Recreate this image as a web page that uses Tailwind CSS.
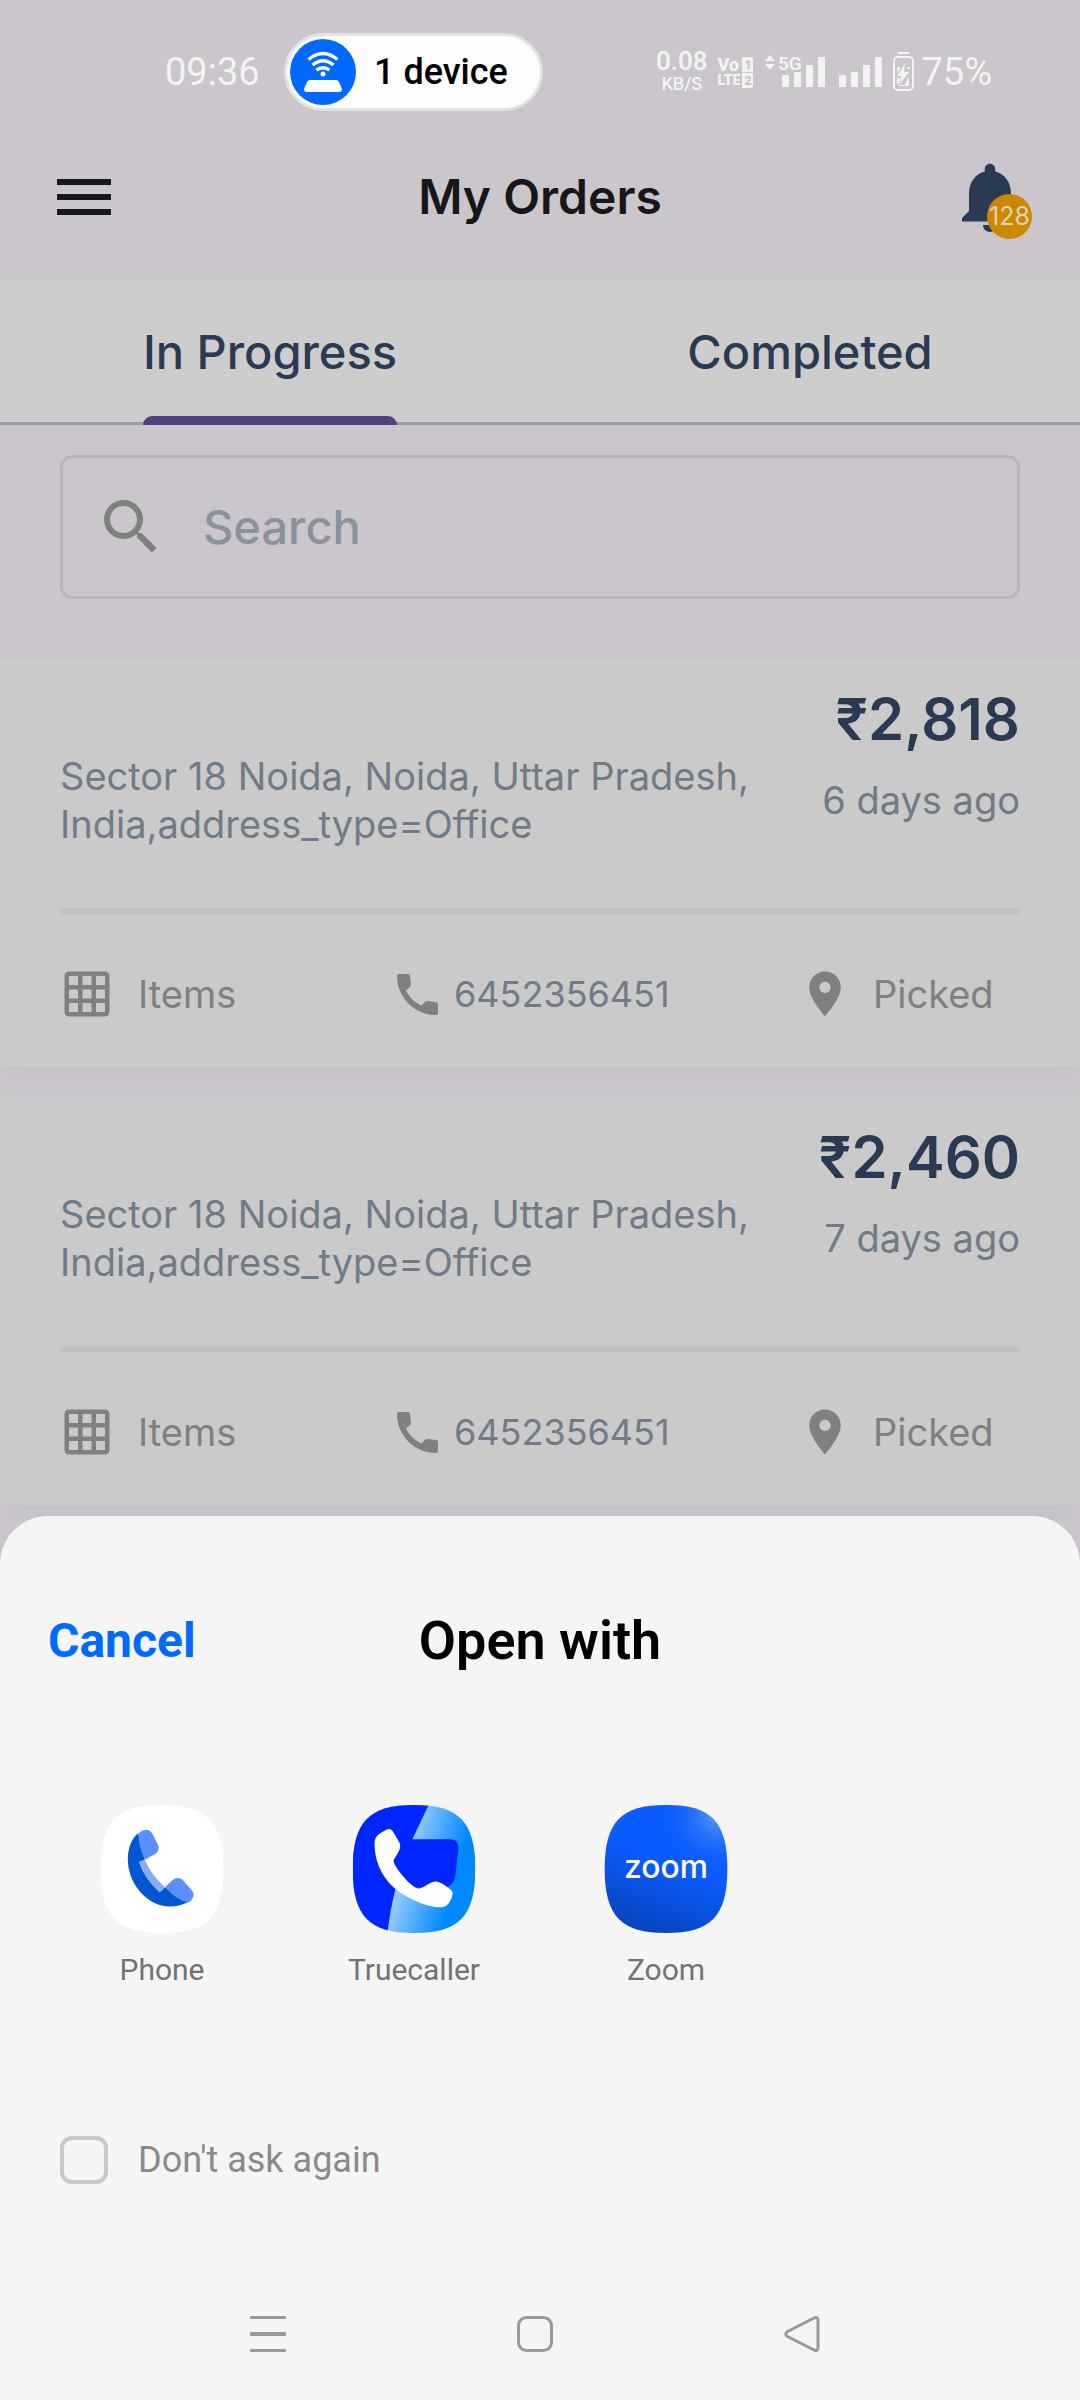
<!DOCTYPE html>
<html lang="en">
<head>
<meta charset="utf-8">
<meta name="viewport" content="width=device-width, initial-scale=1">
<title>My Orders</title>
<script src="https://cdn.jsdelivr.net/npm/@tailwindcss/browser@4"></script>
</head>
<body class="min-h-screen bg-[#cbc6cc] font-['Inter',sans-serif] overflow-x-hidden">

<svg class="hidden" aria-hidden="true">
  <symbol id="grid" viewBox="0 0 24 24"><path d="M20 2H4c-1.100 0-2 .9-2 2v16c0 1.100.9 2 2 2h16c1.100 0 2-.9 2-2V4c0-1.100-.9-2-2-2zM8 20H4v-4h4v4zm0-6H4v-4h4v4zm0-6H4V4h4v4zm6 12h-4v-4h4v4zm0-6h-4v-4h4v4zm0-6h-4V4h4v4zm6 12h-4v-4h4v4zm0-6h-4v-4h4v4zm0-6h-4V4h4v4z"/></symbol>
  <symbol id="call" viewBox="0 0 54 54"><path transform="translate(7 7)" d="M2 0H11Q12.700 0 12.900 2L14 10Q14.200 12 13 13L9 16.500Q14 27 24.500 31.500L28 28Q29 27 31 27L39 28Q41 28 41 30V39Q41 41 39 41C17 41 0 23 0 2Q0 0 2 0Z"/></symbol>
  <symbol id="pin" viewBox="0 0 24 24"><path d="M12 2C8.130 2 5 5.130 5 9c0 5.250 7 13 7 13s7-7.750 7-13c0-3.870-3.130-7-7-7zm0 9.500c-1.380 0-2.500-1.120-2.500-2.500s1.120-2.500 2.500-2.500 2.500 1.120 2.500 2.500-1.120 2.500-2.500 2.500z"/></symbol>
</svg>

<!-- Status bar -->
<div class="flex items-center pt-[33px] pl-[165px] pr-[88px] font-['Roboto',sans-serif] text-[#f4f3f4]">
  <span class="w-[119px] text-[38px] leading-[48px]">09:36</span>
  <div class="flex h-[78px] w-[259px] items-center rounded-full border-[3px] border-[#e3e3e3] bg-[#fdfdfd] pl-[3px]">
    <svg class="size-[66px]" viewBox="0 0 66 66" fill="none">
      <circle cx="33" cy="33" r="33" fill="#0069ff"/>
      <g stroke="#fff" stroke-width="3.500"><path d="M18.500 20.500Q33 8.500 47.500 20.500"/><path d="M22.500 26Q33 17.500 43.500 26"/><path d="M26.500 31Q33 26.500 39.500 31"/></g>
      <circle cx="33" cy="35" r="2.500" fill="#fff"/>
      <path fill="#fff" d="M20 41H46Q48 41 49 43L52 50Q52 53 49 53H17Q14 53 14 50L17 43Q18 41 20 41Z"/>
    </svg>
    <span class="ml-[18px] text-[36px] leading-[48px] font-medium text-black">1 device</span>
  </div>
  <div class="ml-auto flex h-[48px] items-center">
    <div class="mr-[10px] flex flex-col items-center font-medium"><span class="text-[26px] leading-[24px]">0.08</span><span class="text-[18px] leading-[22px]">KB/S</span></div>
    <div class="mr-[12px] grid grid-cols-[auto_11px] gap-x-[2px] gap-y-px text-[18px] leading-[15px] font-black">
      <span>Vo</span><span class="rounded-tr-[3px] bg-[#f4f3f4] text-center text-[13px] text-[#cbc6cc]">1</span>
      <span class="text-[14px]">LTE</span><span class="rounded-br-[3px] bg-[#f4f3f4] text-center text-[13px] text-[#cbc6cc]">2</span>
    </div>
    <svg class="h-[40px] w-[150px] font-semibold" viewBox="769 52 150 40" fill="#f4f3f4">
      <path d="M769 61l5-6 5 6zM769 64l5 6 5-6z"/>
      <text x="782" y="70" font-size="19">5G</text>
      <rect x="786" y="75" width="7" height="12" rx="1"/><rect x="798" y="72" width="7" height="15" rx="1"/><rect x="810" y="65" width="7" height="22" rx="1"/><rect x="822" y="57" width="7" height="30" rx="1"/>
      <rect x="843" y="75" width="7" height="12" rx="1"/><rect x="855" y="72" width="7" height="15" rx="1"/><rect x="867" y="65" width="7" height="22" rx="1"/><rect x="879" y="57" width="7" height="30" rx="1"/>
      <rect x="902" y="52" width="11" height="2"/>
      <rect x="898" y="57" width="19" height="33" rx="4" fill="none" stroke="#f4f3f4" stroke-width="2"/>
      <path d="M909 63l-8 13h4l-1 8 9-12h-5zM911 67h3v2h-3zM901 67h3v2l-3 4zM901 78h3l-1 6h-2zM913 76v10h-10v-1h6z"/>
    </svg>
    <span class="ml-[6px] text-[38px] leading-[48px]">75%</span>
  </div>
</div>

<!-- App header -->
<header class="grid h-[170px] grid-cols-[1fr_auto_1fr] items-center px-12 pt-[2px]">
  <button aria-label="Menu" class="size-[72px]"><svg class="size-[72px]" viewBox="0 0 24 24" fill="#17161a"><path d="M3 18h18v-2H3v2zm0-5h18v-2H3v2zm0-7v2h18V6H3z"/></svg></button>
  <h1 class="text-[48px] leading-[64px] font-semibold text-[#17161a]">My Orders</h1>
  <button aria-label="Notifications" class="relative size-[84px] justify-self-end">
    <svg class="size-[84px]" viewBox="0 0 24 24" fill="#2b3a53"><path d="M12 22c1.100 0 2-.9 2-2h-4c0 1.100.89 2 2 2zm6-6v-5c0-3.070-1.640-5.640-4.500-6.320V4c0-.83-.67-1.500-1.500-1.500s-1.500.67-1.500 1.500v.68C7.630 5.360 6 7.920 6 11v5l-2 2v1h16v-1l-2-2z"/></svg>
    <span class="absolute right-0 bottom-0 flex size-[45px] items-center justify-center rounded-full bg-[#cc8800] text-[25px] text-[#e0d3b8]">128</span>
  </button>
</header>

<nav class="grid grid-cols-2 border-b-[3px] border-[#a29ca6] bg-[#cdcdcd] text-[47px] leading-[141px] font-medium text-[#2b3a53]">
  <a href="#progress" aria-current="page" class="relative justify-self-center">In Progress<span class="absolute inset-x-0 -bottom-[3px] h-[9px] rounded-t-[9px] bg-[#52407f]"></span></a>
  <a href="#completed" class="justify-self-center">Completed</a>
</nav>

<main>
  <label class="mx-[60px] mt-[30px] flex h-[144px] items-center gap-[36px] rounded-[12px] border-[3px] border-[#b9b5bb] px-[32px]">
    <svg class="size-[72px] shrink-0" viewBox="0 0 24 24" fill="#808080"><path d="M15.500 14h-.79l-.28-.27A6.471 6.471 0 0 0 16 9.500 6.500 6.500 0 1 0 9.500 16c1.610 0 3.090-.59 4.230-1.570l.27.28v.79l5 4.990L20.490 19l-4.990-5zm-6 0C7.010 14 5 11.990 5 9.500S7.010 5 9.500 5 14 7.010 14 9.500 11.990 14 9.500 14z"/></svg>
    <input type="search" aria-label="Search" placeholder="Search" class="min-w-0 flex-1 bg-transparent text-[47px] leading-[64px] font-medium outline-none placeholder:text-[#8a939d]">
  </label>

  <article class="mt-[60px] bg-[#cacaca] px-[60px] shadow-[0_8px_24px_#c3bfc8]">
    <div class="flex justify-between pt-[28px] pb-[60px] text-[38px] leading-[48px] text-[#717b87]">
      <p class="pt-[65px]">Sector 18 Noida, Noida, Uttar Pradesh,<br>India,address_type=Office</p>
      <div class="shrink-0 text-right"><p class="mb-[25px] text-[58px] leading-[64px] font-semibold text-[#2b3a53]">₹2,818</p><p>6 days ago</p></div>
    </div>
    <hr class="h-[6px] border-0 bg-[#c1c1c1]">
    <div class="grid grid-cols-[330fr_408fr_222fr] pt-[53px] pb-[46px] text-[38px] leading-[54px] text-[#808080]">
      <button class="flex items-center gap-[24px]"><svg class="size-[54px] fill-[#808080]"><use href="#grid"/></svg>Items</button>
      <a href="tel:6452356451" class="flex items-center gap-[10px] text-[36px] text-[#717b87]"><svg class="size-[54px] fill-[#808080]"><use href="#call"/></svg>6452356451</a>
      <button class="flex items-center gap-[21px]"><svg class="size-[54px] fill-[#808080]"><use href="#pin"/></svg>Picked</button>
    </div>
  </article>

  <article class="mt-[30px] bg-[#cacaca] px-[60px] shadow-[0_8px_24px_#c3bfc8]">
    <div class="flex justify-between pt-[28px] pb-[60px] text-[38px] leading-[48px] text-[#717b87]">
      <p class="pt-[65px]">Sector 18 Noida, Noida, Uttar Pradesh,<br>India,address_type=Office</p>
      <div class="shrink-0 text-right"><p class="mb-[25px] text-[58px] leading-[64px] font-semibold text-[#2b3a53]">₹2,460</p><p>7 days ago</p></div>
    </div>
    <hr class="h-[6px] border-0 bg-[#c1c1c1]">
    <div class="grid grid-cols-[330fr_408fr_222fr] pt-[53px] pb-[46px] text-[38px] leading-[54px] text-[#808080]">
      <button class="flex items-center gap-[24px]"><svg class="size-[54px] fill-[#808080]"><use href="#grid"/></svg>Items</button>
      <a href="tel:6452356451" class="flex items-center gap-[10px] text-[36px] text-[#717b87]"><svg class="size-[54px] fill-[#808080]"><use href="#call"/></svg>6452356451</a>
      <button class="flex items-center gap-[21px]"><svg class="size-[54px] fill-[#808080]"><use href="#pin"/></svg>Picked</button>
    </div>
  </article>
</main>

<!-- App chooser sheet -->
<section role="dialog" aria-label="Open with" class="fixed inset-x-0 bottom-0 rounded-t-[48px] bg-[#f5f5f5] pt-[93px] pb-[48px] font-['Roboto',sans-serif]">
  <div class="grid grid-cols-[1fr_auto_1fr] items-center px-12 leading-[64px]">
    <button class="justify-self-start text-[48px] font-bold text-[#0069ff]">Cancel</button>
    <h2 class="text-[54px] font-semibold text-black">Open with</h2>
  </div>
  <div class="mt-[132px] grid grid-cols-4 px-9 text-[30px] leading-[40px] text-[#737373]">
    <button class="flex flex-col items-center gap-[17px]">
      <svg class="h-[128px] w-[124px]" viewBox="119 75 370 386">
        <path fill="#fff" d="M119 268C119 125 169 75 304 75S489 125 489 268S439 461 304 461S119 411 119 268Z"/>
        <path fill="#0057d0" d="M232 160C190 195 190 280 237 335C278 385 335 391 382 368L313 323L297 338Q250 295 235 247L252 240Z"/>
        <path fill="#5b8eff" d="M234 160Q255 142 270 155Q276 161 293 198Q297 212 286 221L252 240Q230 190 234 160ZM313 323L336 301Q350 290 365 300L394 332Q404 344 396 356Q390 368 382 368L365 364Q335 348 313 323Z"/>
        <path fill="#8aaaff" d="M235 247L252 240Q272 287 313 323L297 338Q255 302 235 247Z"/>
      </svg>Phone
    </button>
    <button class="flex flex-col items-center gap-[17px]">
      <svg class="h-[128px] w-[124px]" viewBox="875 75 370 386">
        <defs>
          <linearGradient id="sky" gradientUnits="userSpaceOnUse" x1="1010" y1="240" x2="1190" y2="290"><stop stop-color="#a9d4ff"/><stop offset="1" stop-color="#0088ff"/></linearGradient>
          <clipPath id="tile"><path d="M875 268C875 125 925 75 1060 75S1245 125 1245 268S1195 461 1060 461S875 411 875 268Z"/></clipPath>
        </defs>
        <g clip-path="url(#tile)">
          <rect x="875" y="75" width="370" height="386" fill="url(#sky)"/>
          <path fill="#0026ff" d="M875 75H1104L1055 178H1168Q1196 178 1194 206L1185 285Q1181 322 1150 324L1005 325Q988 390 980 461H875Z"/>
          <path fill="#fff" d="M941 190C941 165 965 156 978 149Q988 144 995 153L1016 188C1026 208 1003 229 998 243C1000 262 1050 323 1075 328C1090 325 1110 306 1125 306C1140 306 1160 322 1173 333C1184 343 1166 376 1154 381C1135 389 1080 378 1020 340C960 298 941 240 941 190Z"/>
        </g>
      </svg>Truecaller
    </button>
    <button class="flex flex-col items-center gap-[17px]">
      <svg class="h-[128px] w-[124px]" viewBox="0 0 370 386">
        <defs>
          <linearGradient id="deep" x1=".35" y1="1" x2=".55" y2=".45"><stop stop-color="#0845bd"/><stop offset="1" stop-color="#0b5cff"/></linearGradient>
          <radialGradient id="shine" cx=".92" cy=".08" r=".45"><stop stop-color="#5e9bf0"/><stop offset="1" stop-color="#0b5cff" stop-opacity="0"/></radialGradient>
        </defs>
        <path fill="url(#deep)" d="M0 193C0 50 50 0 185 0S370 50 370 193S320 386 185 386S0 336 0 193Z"/>
        <path fill="url(#shine)" d="M0 193C0 50 50 0 185 0S370 50 370 193S320 386 185 386S0 336 0 193Z"/>
        <text x="185" y="219" text-anchor="middle" font-family="Inter, sans-serif" font-size="96" font-weight="500" fill="#fff">zoom</text>
      </svg>Zoom
    </button>
  </div>
  <label class="mt-[146px] ml-[60px] flex w-fit items-center gap-[30px] text-[36px] leading-[48px] text-[#8a8a8a]">
    <input type="checkbox" class="size-[48px] appearance-none rounded-[12px] border-4 border-[#c8c8c8]">Don't ask again
  </label>
  <div class="mt-[132px] grid grid-cols-3 justify-items-center pr-[145px] pl-[134px]">
    <button aria-label="Recent apps"><svg class="size-[36px]" viewBox="0 0 36 36" fill="#999"><rect width="36" height="3" rx="1"/><rect y="16" width="36" height="4" rx="1"/><rect y="33" width="36" height="3" rx="1"/></svg></button>
    <button aria-label="Home"><svg class="size-[36px]" viewBox="0 0 36 36" fill="none" stroke="#999" stroke-width="3"><rect x="1.500" y="1.500" width="33" height="33" rx="8"/></svg></button>
    <button aria-label="Back"><svg class="size-[36px]" viewBox="0 0 36 36" fill="none" stroke="#999" stroke-width="3"><path d="M3.500 15.500L30 2Q34 .5 34 4V32Q34 35.500 30 34L3.500 20.500Q0 18 3.500 15.500Z"/></svg></button>
  </div>
</section>
</body>
</html>
